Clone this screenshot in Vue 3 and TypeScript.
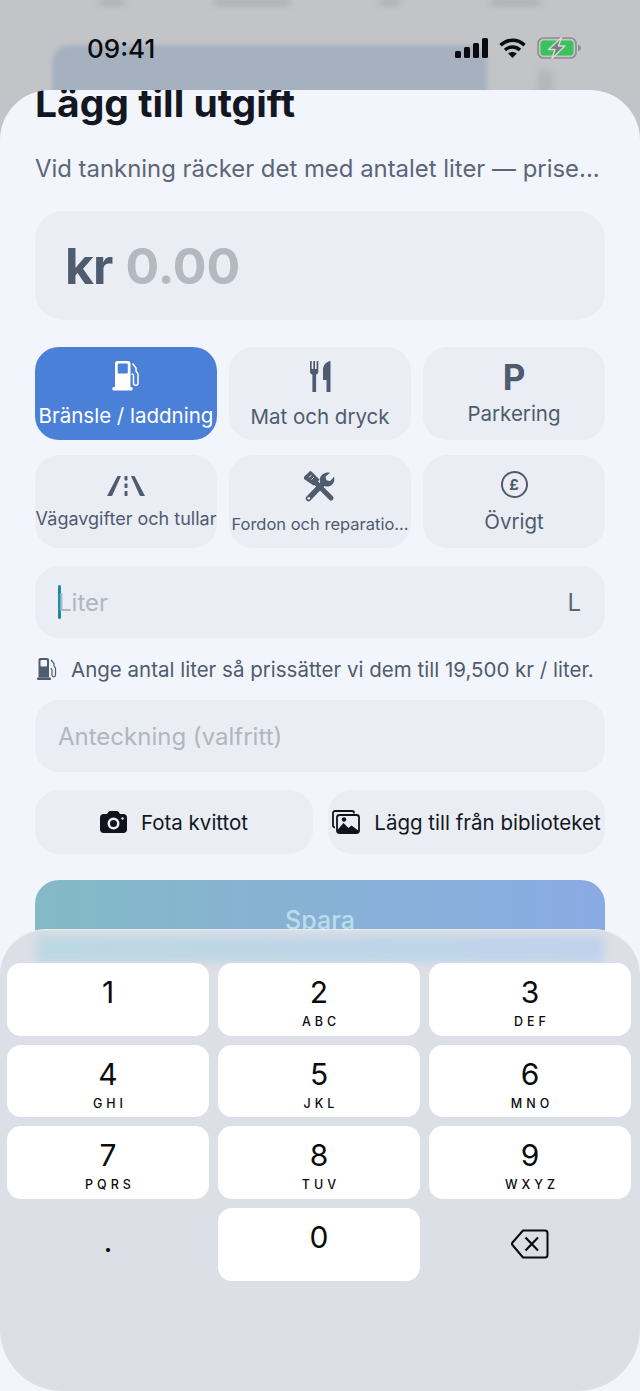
<script setup lang="ts">
interface Category {
  id: string
  label: string
  size: string
  active?: boolean
}

const categories: Category[] = [
  { id: 'fuel', label: 'Bränsle / laddning', size: 'lg', active: true },
  { id: 'food', label: 'Mat och dryck', size: 'lg' },
  { id: 'parking', label: 'Parkering', size: 'lg' },
  { id: 'toll', label: 'Vägavgifter och tullar', size: 'md' },
  { id: 'repair', label: 'Fordon och reparatio...', size: 'sm' },
  { id: 'other', label: 'Övrigt', size: 'lg' },
]

const keys = [
  { digit: '1', letters: '' },
  { digit: '2', letters: 'ABC' },
  { digit: '3', letters: 'DEF' },
  { digit: '4', letters: 'GHI' },
  { digit: '5', letters: 'JKL' },
  { digit: '6', letters: 'MNO' },
  { digit: '7', letters: 'PQRS' },
  { digit: '8', letters: 'TUV' },
  { digit: '9', letters: 'WXYZ' },
]
</script>

<template>
  <div class="screen">
    <div class="backdrop">
      <div class="backdrop-row">
        <i class="w-a"></i>
        <i class="w-b"></i>
        <i class="w-c"></i>
        <i class="w-d"></i>
      </div>
      <div class="backdrop-main">
        <div class="backdrop-card"></div>
        <div class="backdrop-icon"></div>
      </div>
    </div>

    <div class="status-bar">
      <span class="time">09:41</span>
      <div class="status-icons">
        <svg width="33" height="20" viewBox="0 0 33 20">
          <rect x="0" y="13" width="6" height="7" rx="1.5" fill="#0b0b0f" />
          <rect x="9" y="9" width="6" height="11" rx="1.5" fill="#0b0b0f" />
          <rect x="18" y="5" width="6" height="15" rx="1.5" fill="#0b0b0f" />
          <rect x="27" y="0" width="6" height="20" rx="1.5" fill="#0b0b0f" />
        </svg>
        <svg width="27" height="20" viewBox="0 0 27 20" fill="none" stroke="#0b0b0f" stroke-width="3.4">
          <path d="M1.5 7.2C8.3.6 18.7.6 25.5 7.2" />
          <path d="M6 12c4.2-4 10.800-4 15 0" />
          <path d="M13.5 20l-4.300-4.600c2.400-2 6.200-2 8.600 0z" fill="#0b0b0f" stroke="none" />
        </svg>
        <svg width="45" height="22" viewBox="0 0 45 22">
          <rect x="1" y="1" width="38" height="20" rx="5.5" fill="none" stroke="#8b8d90" stroke-width="1.6" />
          <rect x="3.5" y="3.5" width="33" height="15" rx="3.5" fill="#3ac25c" />
          <path d="M41 8c2 .3 3 1.400 3 3s-1 2.700-3 3z" fill="#8b8d90" />
          <path d="M24.500 .5 11.500 12.500h6.500l-3 9 13-12.500h-6.500z" fill="#7b7f83" stroke="#d3dcd4" stroke-width="1.400" stroke-linejoin="round" />
        </svg>
      </div>
    </div>

    <div class="sheet">
      <h1 class="title">Lägg till utgift</h1>
      <p class="subtitle">Vid tankning räcker det med antalet liter — prise...</p>

      <div class="amount">
        <span class="currency">kr</span>
        <span class="amount-value">0.00</span>
      </div>

      <div class="categories">
        <div
          v-for="cat in categories"
          :key="cat.id"
          class="category"
          :class="[cat.id, { active: cat.active }]"
        >
          <svg v-if="cat.id === 'fuel'" class="cat-icon" width="30" height="30" viewBox="0 0 30 30" fill="#fff">
            <path fill-rule="evenodd" d="M4 2.5C4 1.100 5 0 6.500 0h10.500C18.500 0 19.500 1.100 19.500 2.500V26H4zM6.700 3.400v8.300c0 .5.300.8.800.8h8.500c.5 0 .8-.3.800-.8V3.400c0-.5-.3-.8-.8-.8H7.500c-.5 0-.8.300-.8.800z" />
            <rect x="1.5" y="26" width="20" height="3.5" rx="1.2" />
            <path d="M21.500 2.500l3.500 4.500v3l2 3v9c0 3-4.500 3-4.500 0v-7c0-1.500-1-2-2-2" fill="none" stroke="#fff" stroke-width="1.500" />
          </svg>
          <svg v-else-if="cat.id === 'food'" class="cat-icon" width="21" height="31" viewBox="0 0 21 31" fill="#4f5b6e">
            <path d="M0 0h1.700v8h1.600V0H5v8h1.600V0h1.700v10.500c0 1.700-1.100 2.800-2.200 3.300V31H2.400V13.800C1.200 13.300 0 12.200 0 10.500z" />
            <path d="M20.500 0V31h-4V19H13V9C13 4 16.500 .5 20.500 0z" />
          </svg>
          <span v-else-if="cat.id === 'parking'" class="cat-p">P</span>
          <svg v-else-if="cat.id === 'toll'" class="cat-icon" width="38" height="20" viewBox="0 0 38 20" fill="#4f5b6e">
            <path d="M10.500 0h3.500L5.500 19c-.3.700-.7 1-1.500 1H0z" />
            <path d="M24 0h3.500L38 20h-4c-.8 0-1.200-.3-1.500-1z" />
            <rect x="17.500" y="0" width="3" height="4.500" rx=".7" />
            <rect x="17.500" y="7.500" width="3" height="4.500" rx=".7" />
            <rect x="17.500" y="15" width="3" height="5" rx=".7" />
          </svg>
          <svg v-else-if="cat.id === 'repair'" class="cat-icon" width="32" height="32" viewBox="0 0 32 32">
            <path d="M0 6 5.500 .5a1.500 1.500 0 0 1 2 0L15.500 8.500 13 12l-3.500 2.500-9.500-6.500z" fill="#4f5b6e" />
            <path d="M12 12 27 27" stroke="#4f5b6e" stroke-width="5" stroke-linecap="round" fill="none" />
            <path d="M4.500 27.500 18 13.500" stroke="#4f5b6e" stroke-width="5.500" stroke-linecap="round" fill="none" />
            <circle cx="4.800" cy="27.200" r="1.300" fill="#eaedf4" />
            <path d="M17 13a7 7 0 0 1 2-10c2-1.500 5-2 7-1.200l-4.500 4 1 3.500 3.500 1 4-4.500c1 3 0 6-2 8-3 2.500-7 2.500-10.500-.8z" fill="#4f5b6e" />
            <path d="M5 6.500 7.500 4M7.500 8.500 10 6" stroke="#eaedf4" stroke-width="1" />
          </svg>
          <div v-else class="cat-pound">£</div>
          <span class="cat-label" :class="cat.size">{{ cat.label }}</span>
        </div>
      </div>

      <div class="field liter-field">
        <span class="caret"></span>
        <span class="placeholder">Liter</span>
        <span class="unit">L</span>
      </div>

      <div class="hint">
        <svg width="22" height="22" viewBox="0 0 22 22">
          <path d="M1.500 2C1.500 .8 2.300 0 3.500 0H10c1.200 0 2 .8 2 2v17.500H1.500z" fill="#4f5b6e" />
          <rect x="3.500" y="2" width="6.500" height="6.500" rx="1" fill="#f3f5fc" />
          <rect x="0" y="19.500" width="14" height="2.500" rx="1" fill="#4f5b6e" />
          <path d="M14 2l3 3.500v2.500l1.500 2v7c0 2.500-3.500 2.500-3.500 0v-5c0-1-.5-1.500-1.500-1.500" fill="none" stroke="#4f5b6e" stroke-width="1.200" />
        </svg>
        <span>Ange antal liter så prissätter vi dem till 19,500 kr / liter.</span>
      </div>

      <div class="field note-field">
        <span class="placeholder">Anteckning (valfritt)</span>
      </div>

      <div class="receipt-row">
        <div class="receipt-btn">
          <svg width="27" height="22" viewBox="0 0 27 22">
            <path fill-rule="evenodd" d="M3.500 3H7l1.500-2.200C9 .2 9.500 0 10.200 0h6.600c.7 0 1.200.2 1.700.8L20 3h3.500C25.500 3 27 4.500 27 6.500V18.500c0 2-1.500 3.500-3.500 3.500h-20C1.500 22 0 20.500 0 18.500V6.500C0 4.500 1.500 3 3.500 3zM13.500 6.500a6 6 0 1 0 0 12 6 6 0 0 0 0-12zM13.500 9a3.500 3.500 0 1 1 0 7 3.500 3.500 0 0 1 0-7z" fill="#10131c" />
            <circle cx="22.500" cy="7.500" r="1.200" fill="#eaedf4" />
          </svg>
          <span>Fota kvittot</span>
        </div>
        <div class="receipt-btn library">
          <svg width="28" height="24" viewBox="0 0 28 24" fill="none">
            <path d="M3 17.500C1.800 17.500 1 16.700 1 15.500V3c0-1.200.8-2 2-2h17c1.200 0 2 .8 2 2v.5" stroke="#10131c" stroke-width="1.800" />
            <rect x="5" y="5" width="22" height="18" rx="2.500" stroke="#10131c" stroke-width="1.800" />
            <path d="M5 20.500l6.500-7.500 5 5 3-2.500 7.500 5.500V21c0 1.200-.8 2-2 2H7c-1.200 0-2-.8-2-2z" fill="#10131c" />
            <circle cx="12" cy="9.500" r="2.200" fill="#10131c" />
          </svg>
          <span>Lägg till från biblioteket</span>
        </div>
      </div>

      <div class="save">Spara</div>
    </div>

    <div class="keyboard">
      <div class="save-glow"></div>
      <div class="keys">
        <div v-for="key in keys" :key="key.digit" class="key">
          <span class="digit">{{ key.digit }}</span>
          <span class="letters">{{ key.letters }}</span>
        </div>
        <div class="key flat">
          <span class="dot">.</span>
        </div>
        <div class="key">
          <span class="digit">0</span>
        </div>
        <div class="key flat">
          <svg width="38" height="30" viewBox="0 0 38 30" fill="none" stroke="#0b0b0f">
            <path d="M12 1.500h22c1.500 0 2.500 1 2.500 2.500v22c0 1.500-1 2.500-2.500 2.500H12L1.500 16c-.7-.8-.7-1.700 0-2.500z" stroke-width="2" stroke-linejoin="round" />
            <path d="M14.500 8.500 27 21.500M27 8.500 14.500 21.500" stroke-width="2.200" />
          </svg>
        </div>
      </div>
    </div>
  </div>
</template>

<style scoped>
.screen {
  position: relative;
  width: 640px;
  height: 1391px;
  overflow: hidden;
  background: #c3c4c8;
  font-family: Inter, "Liberation Sans", sans-serif;
  color: #4f5b6e;
}
.backdrop {
  display: flex;
  flex-direction: column;
  height: 90px;
  overflow: hidden;
}
.backdrop-row {
  display: flex;
  flex-shrink: 0;
  gap: 90px;
  height: 5px;
  margin-bottom: 40px;
  padding-left: 100px;
  filter: blur(3px);
}
.backdrop-row i {
  display: block;
  background: #a8a9ae;
}
.w-a {
  width: 24px;
}
.w-b {
  width: 76px;
}
.w-c {
  width: 20px;
}
.w-d {
  width: 50px;
}
.backdrop-main {
  display: flex;
  flex-shrink: 0;
  gap: 50px;
  padding-left: 52px;
}
.backdrop-card {
  width: 435px;
  height: 70px;
  border-radius: 18px;
  background: #a5b1bf;
  filter: blur(2px);
}
.backdrop-icon {
  width: 16px;
  height: 30px;
  margin-top: 25px;
  background: #b6b7bb;
  filter: blur(3px);
}
.status-bar {
  position: absolute;
  top: 34px;
  left: 87px;
  right: 59px;
  display: flex;
  justify-content: space-between;
  align-items: center;
  height: 28px;
  z-index: 3;
}
.time {
  font-size: 26px;
  font-weight: 500;
  color: #0b0b0f;
}
.status-icons {
  display: flex;
  align-items: center;
  gap: 11px;
  margin-top: -1px;
  margin-right: -1px;
}
.status-icons svg {
  flex-shrink: 0;
}
.sheet {
  height: 1301px;
  padding: 0 35px;
  background: #f3f5fc;
  border-radius: 50px 50px 0 0;
  overflow: hidden;
  box-sizing: border-box;
}
.title {
  margin: -9px 0 0;
  font-size: 39px;
  line-height: 44px;
  font-weight: 700;
  color: #131722;
}
.subtitle {
  margin: 29px 0 0;
  font-size: 23.9px;
  line-height: 30px;
  white-space: nowrap;
  color: #5b6677;
}
.amount {
  display: flex;
  align-items: center;
  gap: 13px;
  height: 109px;
  margin-top: 27px;
  padding-left: 30px;
  border-radius: 28px;
  background: #eaedf4;
  font-size: 50px;
  font-weight: 700;
}
.currency {
  color: #4f5b6e;
  letter-spacing: -1px;
}
.amount-value {
  color: #b4b8c1;
}
.categories {
  display: grid;
  grid-template-columns: repeat(3, 182px);
  grid-auto-rows: 93px;
  column-gap: 12px;
  row-gap: 15px;
  margin-top: 27px;
}
.category {
  display: flex;
  flex-direction: column;
  align-items: center;
  justify-content: flex-start;
  border-radius: 24px;
  background: #eaedf4;
  overflow: hidden;
}
.category.active {
  background: #4b80d9;
  color: #fff;
}
.cat-icon {
  flex-shrink: 0;
}
.cat-label {
  white-space: nowrap;
  line-height: 26px;
}
.cat-label.lg {
  font-size: 20.5px;
}
.cat-label.md {
  font-size: 18px;
}
.cat-label.sm {
  font-size: 16.5px;
}
.fuel,
.food,
.parking {
  padding-top: 14px;
}
.fuel .cat-label {
  margin-top: 12px;
}
.food .cat-label {
  margin-top: 12px;
}
.parking .cat-label {
  margin-top: 8px;
}
.cat-p {
  font-size: 35px;
  line-height: 32px;
  font-weight: 700;
}
.toll {
  padding-top: 21px;
}
.toll .cat-label {
  margin-top: 10px;
}
.repair {
  padding-top: 16px;
}
.repair .cat-label {
  margin-top: 8px;
}
.other {
  padding-top: 16px;
}
.other .cat-label {
  margin-top: 11px;
}
.cat-pound {
  display: flex;
  align-items: center;
  justify-content: center;
  width: 23px;
  height: 23px;
  border: 2.5px solid #4f5b6e;
  border-radius: 50%;
  font-size: 15px;
  font-weight: 700;
}
.field {
  display: flex;
  align-items: center;
  height: 72px;
  padding: 0 24px 0 23px;
  border-radius: 24px;
  background: #eaedf4;
  font-size: 24px;
}
.liter-field {
  margin-top: 18px;
}
.caret {
  width: 3px;
  height: 34px;
  border-radius: 1.5px;
  margin-right: -3px;
  background: #1b8ba0;
}
.placeholder {
  color: #b1b6c0;
}
.unit {
  margin-left: auto;
  color: #5b6677;
}
.hint {
  display: flex;
  align-items: center;
  gap: 12px;
  height: 62px;
  padding-left: 2px;
  font-size: 20.5px;
  white-space: nowrap;
}
.receipt-row {
  display: grid;
  grid-template-columns: 278px 277px;
  column-gap: 15px;
  margin-top: 18px;
}
.receipt-btn {
  display: flex;
  align-items: center;
  justify-content: center;
  gap: 14px;
  height: 64px;
  border-radius: 24px;
  background: #eaedf4;
  font-size: 20.5px;
  color: #131722;
  white-space: nowrap;
}
.save {
  height: 84px;
  margin-top: 26px;
  padding-top: 25px;
  box-sizing: border-box;
  border-radius: 24px;
  background: linear-gradient(90deg, #84b9c6, #8aaae4);
  color: #bcdcec;
  font-size: 25px;
  font-weight: 500;
  text-align: center;
}
.keyboard {
  position: absolute;
  left: 0;
  right: 0;
  top: 929px;
  height: 462px;
  box-sizing: border-box;
  padding: 33px 9px 0 7px;
  border-radius: 46px 46px 62px 62px;
  border-top: 1px solid #e8ebf0;
  background: #dddfe6;
  overflow: hidden;
}
.save-glow {
  position: absolute;
  left: 36px;
  right: 36px;
  top: 6px;
  height: 26px;
  background: linear-gradient(90deg, #bcd8e1, #bed2ec);
  filter: blur(5px);
}
.keys {
  position: relative;
  display: grid;
  grid-template-columns: repeat(3, 202px);
  grid-auto-rows: 72.5px;
  column-gap: 9px;
  row-gap: 9.2px;
}
.key {
  display: flex;
  flex-direction: column;
  align-items: center;
  padding-top: 12px;
  box-sizing: border-box;
  border-radius: 14px;
  background: #fff;
  color: #0b0b0f;
}
.key.flat {
  justify-content: center;
  padding-top: 0;
  background: transparent;
}
.digit {
  font-size: 30px;
  line-height: 34px;
}
.letters {
  margin-top: 5px;
  margin-right: -4px;
  font-size: 12.5px;
  line-height: 16px;
  font-weight: 500;
  letter-spacing: 4px;
}
.dot {
  font-size: 24px;
  line-height: 24px;
  font-weight: 700;
}
</style>
